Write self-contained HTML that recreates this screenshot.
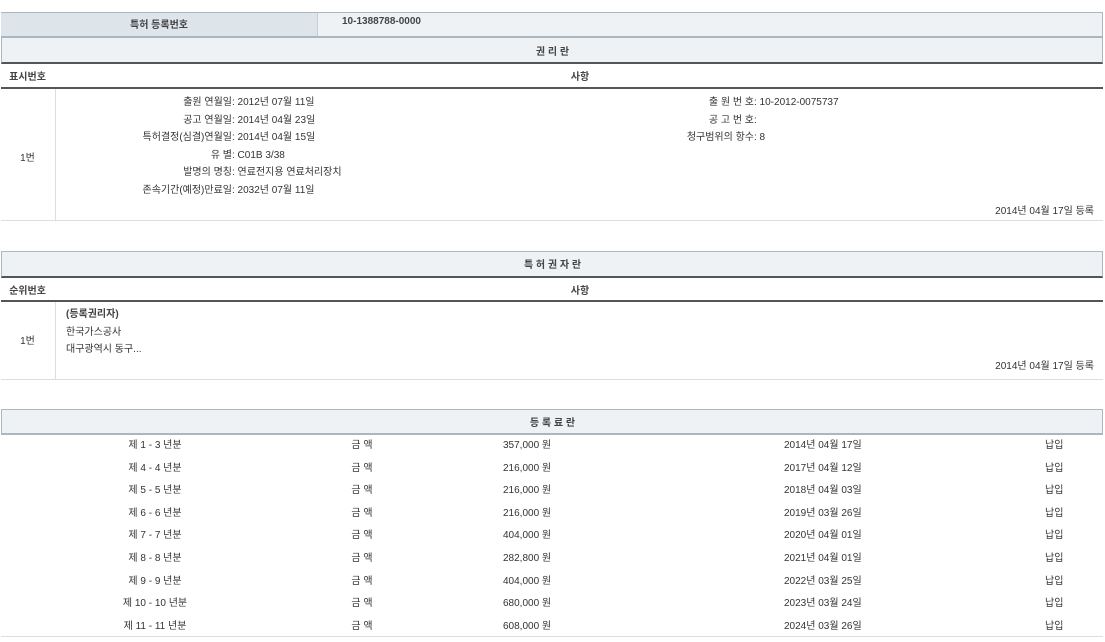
<!DOCTYPE html>
<html><head><meta charset="utf-8"><style>
body{margin:0;width:1105px;height:642px;background:#fff;font-family:"Liberation Sans","Noto Sans CJK KR",sans-serif;font-size:10px;color:#333;position:relative;overflow:hidden}
.a{position:absolute;white-space:nowrap}
.bx{position:absolute;left:1px;width:1102px;box-sizing:border-box}
.hd{background:#eef2f5;border:1px solid #aab7c0}
.c{text-align:center}
.b{font-weight:bold;color:#444}
.r{text-align:right}
.l{position:absolute;white-space:nowrap;line-height:12px}
.l .k{position:absolute;right:0;text-align:right}
.l .v{position:absolute;left:2px}
</style></head><body>
<!-- table 1 -->
<div class="bx" style="top:12px;height:26px;background:#eef2f5;border:1px solid #aab7c0;border-bottom:2px solid #aab7c0"></div>
<div class="a" style="left:1px;top:13px;width:316px;height:23px;background:#dde4ea;border-right:1px solid #c5ced5"></div>
<div class="a b c" style="left:1px;top:16px;width:316px">특허 등록번호</div>
<div class="a b" style="left:342px;top:16px">10-1388788-0000</div>
<div class="bx hd" style="top:38px;height:26px;border-top:none;border-bottom:2px solid #555"></div>
<div class="a b c" style="left:0;top:43px;width:1105px">권 리 란</div>
<div class="bx" style="top:64px;height:25px;border-bottom:2px solid #555"></div>
<div class="a b c" style="left:0;top:68px;width:55px">표시번호</div>
<div class="a b c" style="left:55px;top:68px;width:1050px">사항</div>
<div class="a" style="left:55px;top:89px;width:1px;height:132px;background:#ddd"></div>
<div class="a" style="left:1px;top:220px;width:1102px;height:1px;background:#ddd"></div>
<div class="a c" style="left:0;top:149px;width:55px">1번</div>

<div class="l" style="left:0;width:232px;top:97px"><span class="k">출원 연월일</span></div><div class="l" style="left:232px;top:97px">: 2012년 07월 11일</div>
<div class="l" style="left:0;width:232px;top:115px"><span class="k">공고 연월일</span></div><div class="l" style="left:232px;top:115px">: 2014년 04월 23일</div>
<div class="l" style="left:0;width:232px;top:132px"><span class="k">특허결정(심결)연월일</span></div><div class="l" style="left:232px;top:132px">: 2014년 04월 15일</div>
<div class="l" style="left:0;width:232px;top:150px"><span class="k">유 별</span></div><div class="l" style="left:232px;top:150px">: C01B 3/38</div>
<div class="l" style="left:0;width:232px;top:167px"><span class="k">발명의 명칭</span></div><div class="l" style="left:232px;top:167px">: 연료전지용 연료처리장치</div>
<div class="l" style="left:0;width:232px;top:185px"><span class="k">존속기간(예정)만료일</span></div><div class="l" style="left:232px;top:185px">: 2032년 07월 11일</div>

<div class="l" style="left:0;width:754px;top:97px"><span class="k">출 원 번 호</span></div><div class="l" style="left:754px;top:97px">: 10-2012-0075737</div>
<div class="l" style="left:0;width:754px;top:115px"><span class="k">공 고 번 호</span></div><div class="l" style="left:754px;top:115px">:</div>
<div class="l" style="left:0;width:754px;top:132px"><span class="k">청구범위의 항수</span></div><div class="l" style="left:754px;top:132px">: 8</div>
<div class="a" style="right:11px;top:202px">2014년 04월 17일 등록</div>
<!-- table 2 -->
<div class="bx hd" style="top:251px;height:27px;border-bottom:2px solid #555"></div>
<div class="a b c" style="left:0;top:256px;width:1105px">특 허 권 자 란</div>
<div class="bx" style="top:278px;height:24px;border-bottom:2px solid #555"></div>
<div class="a b c" style="left:0;top:282px;width:55px">순위번호</div>
<div class="a b c" style="left:55px;top:282px;width:1050px">사항</div>
<div class="a" style="left:55px;top:302px;width:1px;height:77px;background:#ddd"></div>
<div class="a" style="left:1px;top:379px;width:1102px;height:1px;background:#ddd"></div>
<div class="a c" style="left:0;top:332px;width:55px">1번</div>
<div class="a" style="left:66px;top:306px;line-height:17.5px"><span class="b">(등록권리자)</span><br>한국가스공사<br>대구광역시 동구...</div>
<div class="a" style="right:11px;top:357px">2014년 04월 17일 등록</div>
<!-- table 3 -->
<div class="bx hd" style="top:409px;height:26px;border-bottom:2px solid #aab7c0"></div>
<div class="a b c" style="left:0;top:414px;width:1105px">등 록 료 란</div>
<div class="bx" style="top:435px;height:202px;border-bottom:1px solid #ddd"></div>
<div class="a c" style="left:55px;width:200px;top:435px;line-height:22.6px">제 1 - 3 년분<br>제 4 - 4 년분<br>제 5 - 5 년분<br>제 6 - 6 년분<br>제 7 - 7 년분<br>제 8 - 8 년분<br>제 9 - 9 년분<br>제 10 - 10 년분<br>제 11 - 11 년분</div>
<div class="a c" style="left:322px;width:80px;top:435px;line-height:22.6px">금 액<br>금 액<br>금 액<br>금 액<br>금 액<br>금 액<br>금 액<br>금 액<br>금 액</div>
<div class="a" style="left:503px;top:435px;line-height:22.6px">357,000 원<br>216,000 원<br>216,000 원<br>216,000 원<br>404,000 원<br>282,800 원<br>404,000 원<br>680,000 원<br>608,000 원</div>
<div class="a" style="left:784px;top:435px;line-height:22.6px">2014년 04월 17일<br>2017년 04월 12일<br>2018년 04월 03일<br>2019년 03월 26일<br>2020년 04월 01일<br>2021년 04월 01일<br>2022년 03월 25일<br>2023년 03월 24일<br>2024년 03월 26일</div>
<div class="a" style="left:1045px;top:435px;line-height:22.6px">납입<br>납입<br>납입<br>납입<br>납입<br>납입<br>납입<br>납입<br>납입</div>
</body></html>
